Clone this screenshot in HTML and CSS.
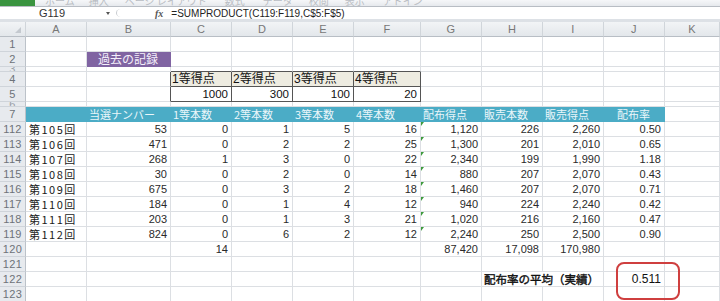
FILE: index.html
```html
<!DOCTYPE html>
<html lang="ja">
<head>
    <meta charset="UTF-8">
    <meta name="viewport" content="width=device-width, initial-scale=1.0">
    <title>過去の記録</title>
    <link rel="stylesheet" href="styles.css">
</head>
<body>

    <div class="ribbon">
        <span class="tab-file"></span>
        <span class="tab t1">ホーム</span>
        <span class="tab t2">挿入</span>
        <span class="tab t3">ページ レイアウト</span>
        <span class="tab t4">数式</span>
        <span class="tab t5">データ</span>
        <span class="tab t6">校閲</span>
        <span class="tab t7">表示</span>
        <span class="tab t8">アドイン</span>
    </div>

    <div class="formula-bar">
        <div class="name-box">G119</div>
        <span class="drop"></span>
        <span class="cancel"></span>
        <span class="fx">fx</span>
        <div class="formula">=SUMPRODUCT(C119:F119,C$5:F$5)</div>
    </div>

    <div class="sheet">
        <table class="grid">
            <colgroup>
                <col class="c-rh">
                <col class="c-a">
                <col class="c-b">
                <col class="c-std">
                <col class="c-std">
                <col class="c-std">
                <col class="c-f">
                <col class="c-std">
                <col class="c-std">
                <col class="c-std">
                <col class="c-std">
                <col class="c-k">
            </colgroup>

            <tr class="col-head">
                <th class="corner"><span class="tri"></span></th>
                <th>A</th><th>B</th><th>C</th><th>D</th><th>E</th><th>F</th>
                <th>G</th><th>H</th><th>I</th><th>J</th><th>K</th>
            </tr>

            <tr>
                <th>1</th>
                <td></td><td></td><td></td><td></td><td></td><td></td><td></td><td></td><td></td><td></td><td></td>
            </tr>
            <tr>
                <th>2</th>
                <td></td><td class="title">過去の記録</td><td></td><td></td><td></td><td></td><td></td><td></td><td></td><td></td><td></td>
            </tr>
            <tr class="thin">
                <th>3</th>
                <td></td><td></td><td class="bt"></td><td class="bt"></td><td class="bt"></td><td class="bt"></td><td></td><td></td><td></td><td></td><td></td>
            </tr>
            <tr>
                <th>4</th>
                <td></td><td class="bl"></td>
                <td class="pt-head">1等得点</td><td class="pt-head">2等得点</td><td class="pt-head">3等得点</td><td class="pt-head">4等得点</td>
                <td></td><td></td><td></td><td></td><td></td>
            </tr>
            <tr>
                <th>5</th>
                <td></td><td class="bl"></td>
                <td class="pt-val">1000</td><td class="pt-val">300</td><td class="pt-val">100</td><td class="pt-val">20</td>
                <td></td><td></td><td></td><td></td><td></td>
            </tr>
            <tr class="thin">
                <th>6</th>
                <td></td><td></td><td></td><td></td><td></td><td></td><td></td><td></td><td></td><td></td><td></td>
            </tr>
            <tr class="band">
                <th>7</th>
                <td></td><td>当選ナンバー</td><td>1等本数</td><td>2等本数</td><td>3等本数</td><td>4等本数</td>
                <td>配布得点</td><td>販売本数</td><td>販売得点</td><td class="center">配布率</td><td class="plain"></td>
            </tr>

            <tr>
                <th>112</th>
                <td class="kai">第105回</td><td class="n">53</td><td class="n">0</td><td class="n">1</td><td class="n">5</td><td class="n">16</td>
                <td class="n warn">1,120</td><td class="n">226</td><td class="n">2,260</td><td class="n">0.50</td><td></td>
            </tr>
            <tr>
                <th>113</th>
                <td class="kai">第106回</td><td class="n">471</td><td class="n">0</td><td class="n">2</td><td class="n">2</td><td class="n">25</td>
                <td class="n warn">1,300</td><td class="n">201</td><td class="n">2,010</td><td class="n">0.65</td><td></td>
            </tr>
            <tr>
                <th>114</th>
                <td class="kai">第107回</td><td class="n">268</td><td class="n">1</td><td class="n">3</td><td class="n">0</td><td class="n">22</td>
                <td class="n warn">2,340</td><td class="n">199</td><td class="n">1,990</td><td class="n">1.18</td><td></td>
            </tr>
            <tr>
                <th>115</th>
                <td class="kai">第108回</td><td class="n">30</td><td class="n">0</td><td class="n">2</td><td class="n">0</td><td class="n">14</td>
                <td class="n warn">880</td><td class="n">207</td><td class="n">2,070</td><td class="n">0.43</td><td></td>
            </tr>
            <tr>
                <th>116</th>
                <td class="kai">第109回</td><td class="n">675</td><td class="n">0</td><td class="n">3</td><td class="n">2</td><td class="n">18</td>
                <td class="n warn">1,460</td><td class="n">207</td><td class="n">2,070</td><td class="n">0.71</td><td></td>
            </tr>
            <tr>
                <th>117</th>
                <td class="kai">第110回</td><td class="n">184</td><td class="n">0</td><td class="n">1</td><td class="n">4</td><td class="n">12</td>
                <td class="n warn">940</td><td class="n">224</td><td class="n">2,240</td><td class="n">0.42</td><td></td>
            </tr>
            <tr>
                <th>118</th>
                <td class="kai">第111回</td><td class="n">203</td><td class="n">0</td><td class="n">1</td><td class="n">3</td><td class="n">21</td>
                <td class="n warn">1,020</td><td class="n">216</td><td class="n">2,160</td><td class="n">0.47</td><td></td>
            </tr>
            <tr>
                <th>119</th>
                <td class="kai">第112回</td><td class="n">824</td><td class="n">0</td><td class="n">6</td><td class="n">2</td><td class="n">12</td>
                <td class="n warn">2,240</td><td class="n">250</td><td class="n">2,500</td><td class="n">0.90</td><td></td>
            </tr>
            <tr>
                <th>120</th>
                <td></td><td></td><td class="n">14</td><td></td><td></td><td></td>
                <td class="n">87,420</td><td class="n">17,098</td><td class="n">170,980</td><td></td><td></td>
            </tr>
            <tr>
                <th>121</th>
                <td></td><td></td><td></td><td></td><td></td><td></td><td></td><td></td><td></td><td></td><td></td>
            </tr>
            <tr>
                <th>122</th>
                <td></td><td></td><td></td><td></td><td></td><td></td><td></td>
                <td class="avg-label" colspan="2">配布率の平均（実績）</td>
                <td class="n avg">0.511</td><td></td>
            </tr>
            <tr>
                <th>123</th>
                <td></td><td></td><td></td><td></td><td></td><td></td><td></td><td></td><td></td><td></td><td></td>
            </tr>
        </table>

        <div class="callout"></div>
    </div>

</body>
</html>
```

FILE: styles.css
```css
body {
    margin: 0;
    width: 720px;
    height: 301px;
    overflow: hidden;
    font-family: "Liberation Sans", "Noto Sans CJK JP", sans-serif;
    font-size: 11px;
    color: #2a2a2a;
    background-color: #fff;
}

/* ribbon tabs, only the bottom edge shows */
.ribbon {
    height: 6px;
    overflow: hidden;
    display: flex;
    align-items: flex-end;
    background: linear-gradient(to bottom, #f6f7f9, #e6e9ed);
    border-bottom: 1px solid #b8bdc4;
}

.tab-file {
    width: 35px;
    height: 6px;
    background-color: #3a9440;
}

.tab {
    font-family: "Noto Sans CJK JP", sans-serif;
    font-size: 10px;
    line-height: 10px;
    color: #b9bdc3;
    white-space: nowrap;
}

.t1 { margin-left: 10px; }
.t2 { margin-left: 14px; }
.t3 { margin-left: 16px; }
.t4 { margin-left: 18px; }
.t5 { margin-left: 18px; }
.t6 { margin-left: 16px; }
.t7 { margin-left: 16px; }
.t8 { margin-left: 18px; }

/* formula bar */
.formula-bar {
    display: flex;
    align-items: center;
    height: 12px;
    background-color: #fff;
    border-bottom: 3px solid #dde1e6;
}

.name-box {
    width: 104px;
    text-align: center;
    font-size: 11px;
    color: #333;
}

.drop {
    width: 0;
    height: 0;
    border-left: 2px solid transparent;
    border-right: 2px solid transparent;
    border-top: 3px solid #555;
    margin-left: 2px;
}

.cancel {
    width: 8px;
    height: 8px;
    margin-left: 6px;
    border-left: 1px solid #c9ccd0;
    border-radius: 50%;
}

.fx {
    margin-left: 30px;
    font-family: "Liberation Serif", serif;
    font-style: italic;
    font-weight: bold;
    font-size: 10px;
    color: #555;
}

.formula {
    margin-left: 8px;
    font-size: 10px;
    color: #222;
    white-space: nowrap;
}

/* worksheet */
.sheet {
    position: relative;
}

.grid {
    width: 720px;
    table-layout: fixed;
    border-collapse: separate;
    border-spacing: 0;
}

.c-rh { width: 26px; }
.c-a { width: 61px; }
.c-b { width: 84px; }
.c-std { width: 61px; }
.c-f { width: 67px; }
.c-k { width: 55px; }

.grid tr {
    height: 15px;
}

.grid td,
.grid th {
    padding: 0 3px 0 2px;
    height: 14px;
    line-height: 14px;
    border-right: 1px solid #dcdfe3;
    border-bottom: 1px solid #dcdfe3;
    white-space: nowrap;
    font-weight: normal;
    text-align: left;
}

.grid th {
    padding: 0;
    text-align: center;
    color: #6d7279;
    background-color: #e7eaee;
    border-right: 1px solid #bcc2c9;
    border-bottom: 1px solid #cfd4da;
    letter-spacing: 0.3px;
}

.col-head th {
    background: linear-gradient(to bottom, #f2f4f6, #e3e7eb);
    border-right: 1px solid #d0d5da;
    border-bottom: 1px solid #b8bec5;
    color: #777;
}

.corner {
    position: relative;
}

.tri {
    position: absolute;
    right: 4px;
    bottom: 3px;
    width: 0;
    height: 0;
    border-left: 6px solid transparent;
    border-bottom: 6px solid #c4c9cf;
}

.grid tr.thin {
    height: 5px;
}

.thin td,
.thin th {
    height: 4px;
    line-height: 4px;
    overflow: hidden;
}

.thin th {
    font-size: 11px;
    color: #9aa0a7;
}

.n {
    text-align: right !important;
}

/* title block */
.title {
    font-family: "Noto Sans CJK JP", sans-serif;
    font-size: 12px;
    text-align: center !important;
    color: #f4effa;
    background-color: #8064a2;
    border-right-color: #8064a2 !important;
    border-bottom-color: #8064a2 !important;
}

/* points table */
.bl {
    border-right-color: #555 !important;
}

.bt {
    border-bottom-color: #555 !important;
}

.pt-head,
.pt-val {
    border-right-color: #555 !important;
    border-bottom-color: #555 !important;
    color: #111;
}

.pt-head {
    padding-left: 1px !important;
    font-size: 12px;
    background-color: #eeece1;
}

.pt-val {
    font-size: 11.5px;
    text-align: right !important;
}

/* header band */
.band td {
    font-family: "Noto Sans CJK JP", sans-serif;
    font-size: 11px;
    color: #eaf6fa;
    background-color: #4bacc6;
    border-right-color: #4bacc6;
    border-bottom-color: #4bacc6;
}

.band td.center {
    text-align: center;
}

.band td.plain {
    background-color: #fff;
    border-right-color: #dcdfe3;
    border-bottom-color: #dcdfe3;
}

.kai {
    font-family: "Noto Sans CJK JP", sans-serif;
    letter-spacing: 1.5px;
    color: #1a1a1a;
    padding-left: 3px !important;
}

.warn {
    position: relative;
}

.warn::before {
    content: "";
    position: absolute;
    left: 0;
    top: 0;
    border-top: 4px solid #3c9a3c;
    border-right: 3px solid transparent;
}

.avg-label {
    font-family: "Noto Sans CJK JP", sans-serif;
    font-weight: bold;
    font-size: 11.5px;
    text-align: right !important;
    padding-right: 4px !important;
    color: #111;
    -webkit-text-stroke: 0.4px #111;
}

.avg {
    font-size: 12px;
    color: #111;
}

.callout {
    position: absolute;
    left: 616px;
    top: 240px;
    width: 60px;
    height: 34px;
    border: 2px solid #cf3f3f;
    border-radius: 8px;
}
```
